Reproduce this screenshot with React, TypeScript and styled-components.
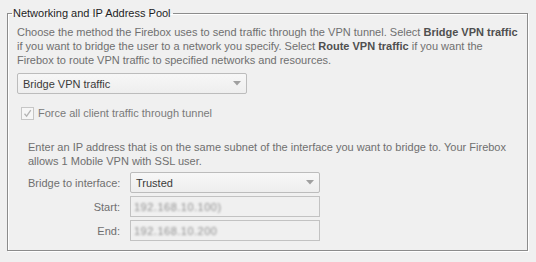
import React from "react";
import styled, { createGlobalStyle } from "styled-components";

const GlobalStyle = createGlobalStyle`
  html, body {
    margin: 0;
    padding: 0;
    background: #f0f0f0;
  }

  body {
    font-family: "Liberation Sans", Arial, sans-serif;
    font-size: 11px;
  }
`;

const Page = styled.div`
  width: 536px;
  height: 262px;
  box-sizing: border-box;
  padding: 6px 8px 0 7px;
  background: #f0f0f0;
`;

const Fieldset = styled.fieldset`
  margin: 0;
  padding: 0 9px 9px 9px;
  border: 1px solid #8c8c8c;
  box-shadow: inset 1px 1px 0 #ffffff, 1px 1px 0 #ffffff;
  min-width: 0;
`;

const Legend = styled.legend`
  margin-left: -5px;
  padding: 0 2px 0 1px;
  font-size: 11px;
  line-height: 14px;
  color: #1e1e1e;
`;

const Description = styled.p`
  margin: 5px 0 0 0;
  font-size: 11px;
  line-height: 14px;
  color: #6f6f6f;

  b {
    font-weight: bold;
    color: #4f4f4f;
  }
`;

const SelectBox = styled.div<{ $width: number }>`
  display: flex;
  align-items: center;
  justify-content: space-between;
  box-sizing: border-box;
  width: ${(p) => p.$width}px;
  height: 21px;
  padding: 0 5px 0 5px;
  border: 1px solid #bcbcbc;
  border-radius: 2px;
  background: linear-gradient(#f7f7f7, #eeeeee);
  color: #3a3a3a;
  font-size: 11px;
`;

const TopSelect = styled.div`
  margin-top: 6px;
`;

const CheckRow = styled.label`
  display: flex;
  align-items: center;
  gap: 4px;
  margin: 12px 0 0 4px;
  color: #7a7a7a;
  font-size: 11px;
  line-height: 14px;
`;

const CheckBox = styled.span`
  display: inline-flex;
  align-items: center;
  justify-content: center;
  box-sizing: border-box;
  width: 13px;
  height: 13px;
  border: 1px solid #c6c6c6;
  background: #f6f6f6;
`;

const BridgeSection = styled.div`
  margin: 20px 0 0 11px;
`;

const FormGrid = styled.div`
  display: grid;
  grid-template-columns: 92px 190px;
  grid-auto-rows: 21px;
  column-gap: 10px;
  row-gap: 3px;
  margin-top: 4px;
  align-items: center;
`;

const FieldLabel = styled.span<{ $align?: "left" | "right" }>`
  text-align: ${(p) => p.$align ?? "right"};
  color: #6f6f6f;
  font-size: 11px;
  white-space: nowrap;
`;

const TextBox = styled.div`
  display: flex;
  align-items: center;
  box-sizing: border-box;
  height: 21px;
  padding: 0 3px;
  border: 1px solid #c2c2c2;
  background: #f0f0f0;
  font-size: 11px;
`;

const Redacted = styled.span`
  color: #8f8f8f;
  filter: blur(1.2px);
  letter-spacing: 0.5px;
`;

const Arrow = () => (
  <svg width="8" height="5" viewBox="0 0 8 5">
    <path d="M0 0 H8 L4 4.5 Z" fill="#a0a0a0" />
  </svg>
);

const Check = () => (
  <svg width="9" height="9" viewBox="0 0 9 9">
    <path d="M1.5 4.8 L3.6 7.2 L7.8 1.2" fill="none" stroke="#b4b4b4" strokeWidth="1.3" />
  </svg>
);

const Select = ({ value, width }: { value: string; width: number }) => (
  <SelectBox $width={width}>
    <span>{value}</span>
    <Arrow />
  </SelectBox>
);

const App: React.FC = () => {
  return (
    <>
      <GlobalStyle />
      <Page>
        <Fieldset>
          <Legend>Networking and IP Address Pool</Legend>
          <Description>
            Choose the method the Firebox uses to send traffic through the VPN tunnel. Select{" "}
            <b>Bridge VPN traffic</b> if you want to bridge the user to a network you specify. Select{" "}
            <b>Route VPN traffic</b> if you want the Firebox to route VPN traffic to specified networks and
            resources.
          </Description>
          <TopSelect>
            <Select value="Bridge VPN traffic" width={230} />
          </TopSelect>
          <CheckRow>
            <CheckBox>
              <Check />
            </CheckBox>
            Force all client traffic through tunnel
          </CheckRow>
          <BridgeSection>
            <Description>
              Enter an IP address that is on the same subnet of the interface you want to bridge to. Your Firebox
              allows 1 Mobile VPN with SSL user.
            </Description>
            <FormGrid>
              <FieldLabel $align="left">Bridge to interface:</FieldLabel>
              <Select value="Trusted" width={190} />
              <FieldLabel>Start:</FieldLabel>
              <TextBox>
                <Redacted>192.168.10.100)</Redacted>
              </TextBox>
              <FieldLabel>End:</FieldLabel>
              <TextBox>
                <Redacted>192.168.10.200</Redacted>
              </TextBox>
            </FormGrid>
          </BridgeSection>
        </Fieldset>
      </Page>
    </>
  );
};

export default App;
